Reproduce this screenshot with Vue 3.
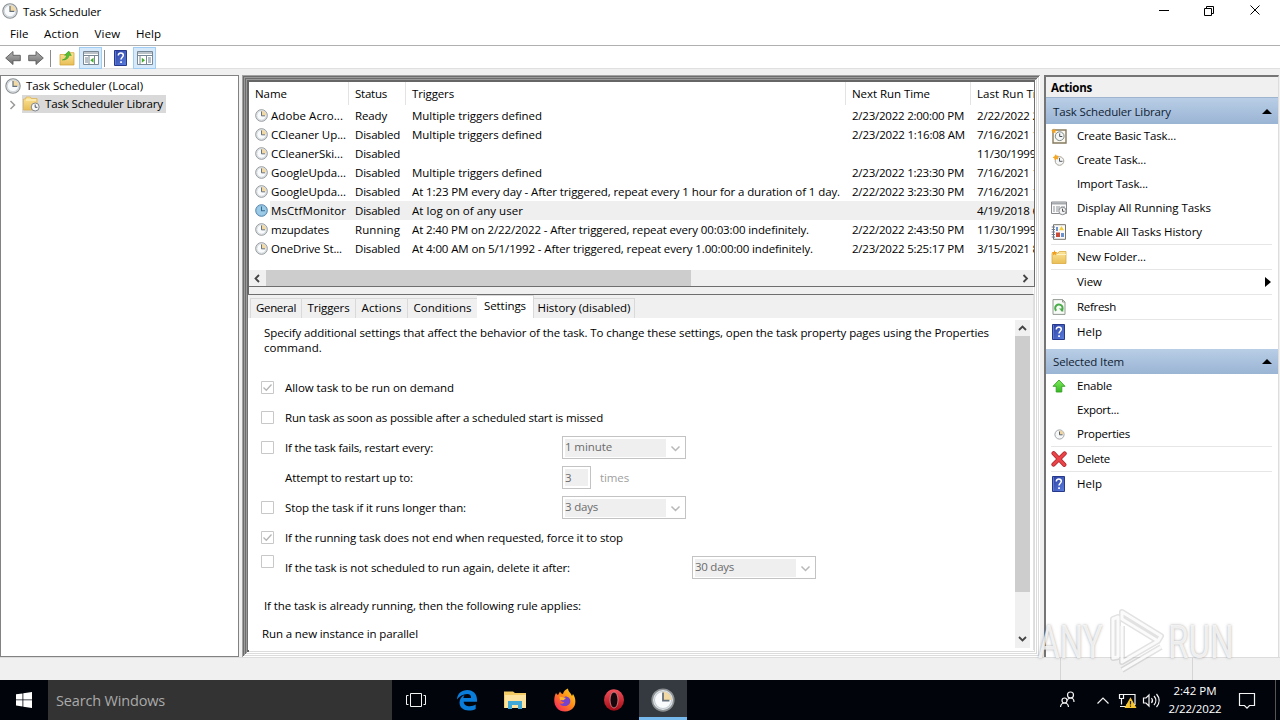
<script setup>
// Spreads the letters of a label so that it fills the given width in pixels.
const vFit = {
  mounted(el, { value }) {
    if (!value) return
    const natural = el.getBoundingClientRect().width
    el.style.letterSpacing = `${(value - natural) / el.textContent.length}px`
  }
}

const menu = [['File', 18.5], ['Action', 35], ['View', 26], ['Help', 25]]

const M = ['Multiple triggers defined', 130]
const rows = [
  { name: ['Adobe Acro...', 72], status: ['Ready', 32], trig: M, next: ['2/23/2022 2:00:00 PM', 112], last: '2/22/2022 2:00:00 PM' },
  { name: ['CCleaner Up...', 75], status: ['Disabled', 45], trig: M, next: ['2/23/2022 1:16:08 AM', 113], last: '7/16/2021 1:16:08 AM' },
  { name: ['CCleanerSki...', 72], status: ['Disabled', 45], trig: ['', 0], next: ['', 0], last: '11/30/1999 12:00:00 AM' },
  { name: ['GoogleUpda...', 75], status: ['Disabled', 45], trig: M, next: ['2/23/2022 1:23:30 PM', 112], last: '7/16/2021 1:23:30 PM' },
  { name: ['GoogleUpda...', 75], status: ['Disabled', 45], trig: ['At 1:23 PM every day - After triggered, repeat every 1 hour for a duration of 1 day.', 428], next: ['2/22/2022 3:23:30 PM', 112], last: '7/16/2021 1:23:30 PM' },
  { name: ['MsCtfMonitor', 75], status: ['Disabled', 45], trig: ['At log on of any user', 111], next: ['', 0], last: '4/19/2018 6:00:00 PM', sel: true },
  { name: ['mzupdates', 58], status: ['Running', 45], trig: ['At 2:40 PM on 2/22/2022 - After triggered, repeat every 00:03:00 indefinitely.', 397], next: ['2/22/2022 2:43:50 PM', 112], last: '11/30/1999 12:00:00 AM' },
  { name: ['OneDrive St...', 71], status: ['Disabled', 45], trig: ['At 4:00 AM on 5/1/1992 - After triggered, repeat every 1.00:00:00 indefinitely.', 401], next: ['2/23/2022 5:25:17 PM', 112], last: '3/15/2021 8:25:17 PM' }
]

const tabs = [['General', 40, 't1'], ['Triggers', 42, 't2'], ['Actions', 40, 't3'], ['Conditions', 58, 't4'], ['Settings', 42, 't5'], ['History (disabled)', 93, 't6']]

const settings = [
  { text: 'Allow task to be run on demand', w: 169, box: true, on: true },
  { text: 'Run task as soon as possible after a scheduled start is missed', w: 318, box: true },
  { text: 'If the task fails, restart every:', w: 148, box: true, combo: ['1 minute', 47] },
  { text: 'Attempt to restart up to:', w: 128, field: true },
  { text: 'Stop the task if it runs longer than:', w: 181, box: true, combo: ['3 days', 33] },
  { text: 'If the running task does not end when requested, force it to stop', w: 338, box: true, on: true },
  { text: 'If the task is not scheduled to run again, delete it after:', w: 285, box: true, raised: true, combo: ['30 days', 39], far: true }
]

const groups = [
  { title: ['Task Scheduler Library', 118], items: [
    { t: 'Create Basic Task...', w: 99, i: 'basic' },
    { t: 'Create Task...', w: 69, i: 'create' },
    { t: 'Import Task...', w: 71 },
    { t: 'Display All Running Tasks', w: 134, i: 'display' },
    { t: 'Enable All Tasks History', w: 125, i: 'history' },
    { t: 'New Folder...', w: 69, i: 'newfolder', sep: true },
    { t: 'View', w: 25, sep: true, arrow: true },
    { t: 'Refresh', w: 39, i: 'refresh', sep: true },
    { t: 'Help', w: 25, i: 'help', sep: true }
  ] },
  { title: ['Selected Item', 71], items: [
    { t: 'Enable', w: 35, i: 'enable' },
    { t: 'Export...', w: 42 },
    { t: 'Properties', w: 53, i: 'props' },
    { t: 'Delete', w: 33, i: 'delete', sep: true },
    { t: 'Help', w: 25, i: 'help', sep: true }
  ] }
]
</script>

<template>
  <div class="screen">
    <svg class="defs" width="0" height="0">
      <defs>
        <linearGradient id="gArrow" x1="0" y1="0" x2="0" y2="1"><stop offset="0" stop-color="#b4b4b4" /><stop offset="1" stop-color="#6e6e6e" /></linearGradient>
        <linearGradient id="gFolder" x1="0" y1="0" x2="0" y2="1"><stop offset="0" stop-color="#fbe59a" /><stop offset="1" stop-color="#e9be55" /></linearGradient>
        <linearGradient id="gHelp" x1="0" y1="0" x2="1" y2="1"><stop offset="0" stop-color="#2b3f9f" /><stop offset="1" stop-color="#5b7fe0" /></linearGradient>
        <linearGradient id="gGreen" x1="0" y1="0" x2="0" y2="1"><stop offset="0" stop-color="#7fef5c" /><stop offset="1" stop-color="#35b722" /></linearGradient>
        <linearGradient id="gFox" x1="1" y1="0" x2="0" y2="1"><stop offset="0" stop-color="#ffe226" /><stop offset=".45" stop-color="#ff8a16" /><stop offset="1" stop-color="#f5156c" /></linearGradient>
        <linearGradient id="gOpera" x1="0" y1="0" x2="0" y2="1"><stop offset="0" stop-color="#f2525c" /><stop offset="1" stop-color="#a00a14" /></linearGradient>
        <symbol id="clock" viewBox="0 0 16 16">
          <circle cx="8" cy="8" r="7.2" fill="#dfe6ea" stroke="#8d9092" stroke-width="1.1" />
          <circle cx="8" cy="8" r="5.7" fill="#f8fafb" stroke="#c3cad0" stroke-width=".7" />
          <path d="M8 8V2.3A5.7 5.7 0 0 1 13.7 8Z" fill="#f2d9a4" />
          <path d="M8 3v5.4h4.3" fill="none" stroke="#66707a" stroke-width="1.2" />
        </symbol>
        <symbol id="clockblue" viewBox="0 0 16 16">
          <circle cx="8" cy="8" r="7.2" fill="#93c0de" stroke="#5689ae" stroke-width="1.2" />
          <circle cx="8" cy="8" r="5.5" fill="#9ccbe7" />
          <path d="M8 3v5.4h4.3" fill="none" stroke="#3a6c90" stroke-width="1.3" />
        </symbol>
        <symbol id="left" viewBox="0 0 16 16"><path d="M.7 8 8 1.5v3.8h7.3v5.4H8v3.8Z" fill="url(#gArrow)" stroke="#5c5c5c" stroke-width=".9" /></symbol>
        <symbol id="right" viewBox="0 0 16 16"><path d="M15.3 8 8 1.5v3.8H.7v5.4H8v3.8Z" fill="url(#gArrow)" stroke="#5c5c5c" stroke-width=".9" /></symbol>
        <symbol id="upfolder" viewBox="0 0 16 16">
          <path d="M1 15V4.5h6l1.5-1.8H15V15Z" fill="url(#gFolder)" stroke="#d3a63c" stroke-width=".8" />
          <path d="M3.3 10C6 9.300 7.300 7.500 7.700 5.200L5.500 5.300 9.800 1l2.500 4.500-2.200-.2C9.600 8.500 7 10.300 3.300 10Z" fill="#52c234" stroke="#2d941f" stroke-width=".5" />
        </symbol>
        <symbol id="paneL" viewBox="0 0 16 14">
          <path d="M.5.5h15v13H.5Z" fill="#fff" stroke="#788794" /><path d="M1 2h14M1 4.500h14" stroke="#788794" />
          <path d="M6 5v9M11.500 5v9" stroke="#788794" /><path d="M2 7h3M2 9h3M2 11h3" stroke="#6f8090" />
          <path d="M10.500 6.800v5L7.300 9.300Z" fill="#3faa2c" />
        </symbol>
        <symbol id="paneR" viewBox="0 0 16 14">
          <path d="M.5.5h15v13H.5Z" fill="#fff" stroke="#788794" /><path d="M1 2h14M1 4.500h14" stroke="#788794" />
          <path d="M9.500 5v9M3 5v9" stroke="#788794" /><path d="M11 7h3M11 9h3M11 11h3" stroke="#6f8090" />
          <path d="M4.800 6.800v5L8 9.300Z" fill="#3faa2c" />
        </symbol>
        <symbol id="help" viewBox="0 0 13 16">
          <path d="M.5.5h12v15H.5Z" fill="url(#gHelp)" stroke="#26388c" />
          <path d="M1.500 1v14" stroke="#5f78d0" />
          <path d="M4.300 5.600C4.300 3.700 5.500 3 6.800 3s2.500.8 2.500 2.300c0 1.900-2.300 2-2.300 4.200" fill="none" stroke="#fff" stroke-width="1.500" />
          <path d="M6.200 11.200h1.700v1.700H6.200Z" fill="#fff" />
        </symbol>
        <symbol id="folderclock" viewBox="0 0 17 16">
          <path d="M.5 14V3h2l.8-2h4l1 1.500H14V14Z" fill="url(#gFolder)" stroke="#dcb358" stroke-width=".8" />
          <path d="M3 4h10" stroke="#fff6d3" />
          <circle cx="12.200" cy="11" r="4" fill="#f7f8f8" stroke="#80878d" /><path d="M12.200 8.500v2.800h2.200" fill="none" stroke="#4c555d" />
        </symbol>
        <symbol id="basic" viewBox="0 0 16 16">
          <path d="M2 2h13v13H2Z" fill="#fbf8ef" stroke="#85795f" stroke-width="1.400" />
          <circle cx="8.700" cy="8.200" r="4.400" fill="#f4f6f6" stroke="#7c8a88" /><path d="M8.700 5.500v3h2.600" fill="none" stroke="#46504e" />
          <path d="m3 .2.8 1.700 1.900.2-1.400 1.300.4 1.900L3 4.400l-1.700.9.300-1.900L.2 2.100l2-.2Z" fill="#f3a11e" />
        </symbol>
        <symbol id="create" viewBox="0 0 16 16">
          <circle cx="8.500" cy="9" r="4.300" fill="#f4f6f6" stroke="#a9a39a" /><path d="M8.500 6v3.300h3" fill="none" stroke="#565e66" />
          <path d="m4.700 2.800.7 1.500 1.800-.2-1.100 1.400.8 1.500-1.700-.4-1.100 1.300-.2-1.700-1.600-.8 1.600-.7Z" fill="#f5a623" stroke="#f5a623" />
        </symbol>
        <symbol id="display" viewBox="0 0 16 16">
          <path d="M.5 2h15v11.500H.5Z" fill="#fbfbfb" stroke="#868a8e" /><path d="M1 3.500h14" stroke="#a5a9ad" stroke-width="2" />
          <path d="M2 7h2M2 9h2M2 11h2M5 7h4M5 9h3M5 11h2M10 7h4" stroke="#8d9296" />
          <circle cx="11.500" cy="11" r="3.700" fill="#f4f4f4" stroke="#868a8e" /><path d="M11.500 8.700v2.600h2" fill="none" stroke="#555" />
        </symbol>
        <symbol id="history" viewBox="0 0 16 16">
          <path d="M2.500.7h12v14.600h-12Z" fill="#fafafa" stroke="#76736b" />
          <path d="M.7 3H4M.7 5.500H4M.7 8H4M.7 10.500H4M.7 13H4" stroke="#6d7a94" />
          <path d="m10.500 2 2.500 4.200H8Z" fill="#f5cb35" /><path d="M5 8.500h4V13H5Z" fill="#c64a35" /><path d="M5 3h2v4H5Zm5 6h3v4h-3Z" fill="#6a93cf" />
        </symbol>
        <symbol id="newfolder" viewBox="0 0 16 16">
          <path d="M1 14.500V4.200h6l1.200-1.700H15v12Z" fill="url(#gFolder)" stroke="#d9ab43" stroke-width=".8" /><path d="M6 5.500h9" stroke="#fff2c2" />
          <path d="m3.500 1 .7 1.900 2 .2-1.600 1.300.5 2-1.600-1.200-1.700 1.200.5-2L.7 3.100l2.100-.2Z" fill="#f39a16" />
        </symbol>
        <symbol id="refresh" viewBox="0 0 16 16">
          <path d="M2 .6h9.500L14 3v12.400H2Z" fill="#f7faf6" stroke="#929a90" /><path d="M11.500.6V3H14" fill="none" stroke="#929a90" />
          <path d="M5.300 11.800A3.700 3.700 0 1 1 10.200 12" fill="none" stroke="#49ac49" stroke-width="2" /><path d="M7.800 9.400h4.400V13Z" fill="#49ac49" />
        </symbol>
        <symbol id="enable" viewBox="0 0 16 16"><path d="M8 2 14 8.300h-3.200V14H5.200V8.300H2Z" fill="url(#gGreen)" stroke="#35a025" stroke-width=".9" /></symbol>
        <symbol id="props" viewBox="0 0 16 16"><circle cx="8.500" cy="8.500" r="4.600" fill="#f6f7f7" stroke="#a0a5a8" /><path d="M8.500 8.500V4.500a4 4 0 0 1 4 4Z" fill="#f1d5a0" /><path d="M8.500 5.500v3.300h3" fill="none" stroke="#59616a" /></symbol>
        <symbol id="delete" viewBox="0 0 16 16"><path d="M2.600 2.300 13.300 13.800M13.600 2.500 2.500 13.600" stroke="#a92226" stroke-width="4.200" stroke-linecap="round" /><path d="M2.600 2.300 13.300 13.800M13.600 2.500 2.500 13.600" stroke="#e94449" stroke-width="2.800" stroke-linecap="round" /></symbol>
      </defs>
    </svg>

    <header class="title">
      <svg class="i16"><use href="#clock" /></svg>
      <span v-fit="78">Task Scheduler</span>
      <svg class="winbtns" viewBox="0 0 120 24" fill="none" stroke="#000">
        <path d="M9 10.500h10M54.500 8.500h7v7h-7ZM56.500 8.500v-2h7v7h-2M100.500 5.500l9 9M109.500 5.500l-9 9" />
      </svg>
    </header>
    <nav class="menu"><span v-for="m in menu" :key="m[0]" v-fit="m[1]">{{ m[0] }}</span></nav>
    <div class="tools">
      <svg class="i16"><use href="#left" /></svg>
      <svg class="i16 second"><use href="#right" /></svg>
      <i class="div d1"></i>
      <svg class="i16"><use href="#upfolder" /></svg>
      <span class="hot h1"><svg class="pane"><use href="#paneL" /></svg></span>
      <i class="div d2"></i>
      <svg class="book"><use href="#help" /></svg>
      <span class="hot h2"><svg class="pane"><use href="#paneR" /></svg></span>
    </div>

    <main class="main">
      <aside class="tree">
        <div class="root"><svg class="i16"><use href="#clock" /></svg><span v-fit="117">Task Scheduler (Local)</span></div>
        <div class="node">
          <svg class="chev" viewBox="0 0 8 10"><path d="m1.500 1 4 4-4 4" fill="none" stroke="#999" stroke-width="1.500" /></svg>
          <div class="picked"><svg class="fold"><use href="#folderclock" /></svg><span v-fit="118">Task Scheduler Library</span></div>
        </div>
      </aside>

      <section class="center">
        <div class="list">
          <div class="grid head">
            <span><b v-fit="32">Name</b></span><span><b v-fit="32">Status</b></span><span><b v-fit="42">Triggers</b></span><span><b v-fit="78">Next Run Time</b></span><span><b v-fit="76">Last Run Time</b></span>
          </div>
          <div v-for="(r, n) in rows" :key="n" class="grid row" :class="{ sel: r.sel }">
            <span class="nm"><svg class="i14"><use :href="r.sel ? '#clockblue' : '#clock'" /></svg><b v-fit="r.name[1]">{{ r.name[0] }}</b></span>
            <span><b v-fit="r.status[1]">{{ r.status[0] }}</b></span>
            <span><b v-fit="r.trig[1]">{{ r.trig[0] }}</b></span>
            <span><b v-fit="r.next[1]">{{ r.next[0] }}</b></span>
            <span class="last"><b>{{ r.last }}</b></span>
          </div>
          <div class="hbar">
            <svg viewBox="0 0 17 15"><path d="m10 4-3.500 3.500L10 11" /></svg>
            <i></i>
            <svg class="end" viewBox="0 0 17 15"><path d="m6.500 4 3.500 3.500L6.500 11" /></svg>
          </div>
        </div>

        <div class="detail">
          <div class="tabs"><div v-for="t in tabs" :key="t[0]" class="tab" :class="t[2]"><span v-fit="t[1]">{{ t[0] }}</span></div></div>
          <div class="page">
            <div class="form">
              <p class="intro"><span v-fit="725">Specify additional settings that affect the behavior of the task. To change these settings, open the task property pages using the Properties</span><br><span v-fit="58">command.</span></p>
              <div v-for="s in settings" :key="s.text" class="opt">
                <svg v-if="s.box" class="check" :class="{ raised: s.raised }" viewBox="0 0 13 13"><path d="M.5.5h12v12H.5Z" fill="#fff" stroke="#c8c8c8" /><path v-if="s.on" d="m2.500 6.500 2.800 2.800 5.200-5.800" fill="none" stroke="#b5b5b5" stroke-width="1.300" /></svg>
                <span v-else class="check"></span>
                <span class="lbl" :class="{ far: s.far }"><b v-fit="s.w">{{ s.text }}</b></span>
                <div v-if="s.combo" class="combo"><span class="val"><b v-fit="s.combo[1]">{{ s.combo[0] }}</b></span><svg class="drop" viewBox="0 0 17 20"><path d="m4.500 8.500 4 4 4-4" fill="none" stroke="#b8b8b8" stroke-width="1.500" /></svg></div>
                <template v-if="s.field"><div class="field"><span>3</span></div><span class="times"><b v-fit="29">times</b></span></template>
              </div>
              <p class="rule"><span v-fit="317">If the task is already running, then the following rule applies:</span></p>
              <p class="inst"><span v-fit="156">Run a new instance in parallel</span></p>
            </div>
            <div class="vbar">
              <svg viewBox="0 0 15 16"><path d="m4 10 3.500-3.500L11 10" /></svg>
              <i></i>
              <svg class="end" viewBox="0 0 15 16"><path d="m4 6 3.500 3.500L11 6" /></svg>
            </div>
          </div>
        </div>
      </section>

      <aside class="actions">
        <h2><span v-fit="41">Actions</span></h2>
        <div v-for="g in groups" :key="g.title[0]" class="group">
          <h3><span v-fit="g.title[1]">{{ g.title[0] }}</span><svg viewBox="0 0 10 5"><path d="M0 5 5 0l5 5Z" fill="#000" /></svg></h3>
          <div v-for="(a, n) in g.items" :key="n" class="act" :class="{ sep: a.sep }">
            <span class="ic"><svg v-if="a.i" :class="a.i === 'help' ? 'book' : 'i16'"><use :href="'#' + a.i" /></svg></span>
            <span class="name" v-fit="a.w">{{ a.t }}</span>
            <svg v-if="a.arrow" class="sub" viewBox="0 0 6 10"><path d="m0 0 6 5-6 5Z" fill="#000" /></svg>
          </div>
        </div>
      </aside>
    </main>

    <footer class="status"><i class="s1"></i><i class="s2"></i></footer>

    <div class="taskbar">
      <div class="start"><svg width="16" height="16" viewBox="0 0 16 16"><path d="M0 2.300 6.500 1.400v6.100H0ZM7.300 1.300 16 0v7.500H7.300ZM0 8.300h6.500v6.200L0 13.600ZM7.300 8.300H16V16l-8.700-1.300Z" fill="#fff" /></svg></div>
      <div class="search"><span v-fit="109">Search Windows</span></div>
      <div class="app first"><svg width="20" height="14" viewBox="0 0 20 14" fill="none" stroke="#f4f4f4"><path d="M4.500.5h11v13h-11ZM2.500 2.500h-2v9h2M17.500 2.500h2v9h-2" /></svg></div>
      <div class="app edge"><svg width="22" height="22" viewBox="0 0 22 22"><path d="M1 10.500C1.400 4.500 5.500 1 11.300 1 17.400 1 21 5.300 21 10.600v2.100H7.700c.2 3.300 3 4.600 6 4.600 2.300 0 4.200-.6 6-1.700v4.300C17.700 21 15.400 21.600 12.700 21.600 7.300 21.600 3.500 18.500 3.500 13.600c0-3.600 2-6.200 5-7.700-.7.900-1 1.900-1.100 3.200h7.700c0-2.700-1.200-4-3.900-4C7 5.100 3.500 7.200 1 10.500Z" fill="#0a7cd9" /></svg></div>
      <div class="app"><svg width="22" height="20" viewBox="0 0 22 20"><path d="M0 18V1.500h9L11 3h11v15Z" fill="#f2cb65" /><path d="M1 5h21v13H1Z" fill="#fce4a0" /><path d="M4 19v-8h14v8h-4v-4H8v4Z" fill="#40a9d8" /></svg></div>
      <div class="app"><svg width="24" height="24" viewBox="0 0 24 24"><path d="M3 5c.6 1 1.200 1.700 2 2l2-3.500c.8 1.600 1.600 2.200 3 2.500C10.500 3.500 12 1.500 15 .5c0 3 3 4.500 4 7.500l1-2c4.500 6.500 3 17-8 17.500C3 23.500-1.500 14 3 5Z" fill="url(#gFox)" /><path d="M7 10.500c2 .2 3.500-.4 5-2 4 0 5.800 2.500 5.200 5.700-1 4.300-8 5.500-10.600 1.300 2 .7 3.700.2 4.800-1.200-2.200-.2-3.800-1.500-4.400-3.800Z" fill="#7542c9" /><path d="M6.500 8.500 13 10l-2.500 2.300-3.500-.3Z" fill="#ffb42d" /></svg></div>
      <div class="app"><svg width="22" height="22" viewBox="0 0 22 22"><ellipse cx="11" cy="11" rx="10" ry="10.700" fill="url(#gOpera)" /><ellipse cx="11" cy="11" rx="4" ry="8" fill="#15070b" stroke="#dc8c8f" stroke-width=".8" /></svg></div>
      <div class="app live"><svg width="24" height="24"><use href="#clock" /></svg></div>
      <div class="tray">
        <svg width="220" height="40" viewBox="1060 680 220 40" fill="none" stroke="#f3f3f3" stroke-width="1.200">
          <circle cx="1070.500" cy="695" r="3" /><circle cx="1064.500" cy="700.500" r="2.500" /><path d="M1060.500 707c.3-2.500 1.800-4 4-4s3.800 1.500 4 4M1067 700.500c1-2 2-2.500 3.500-2.500 2.500 0 3.500 2 3.500 4" />
          <path d="m1097.500 703.500 5.500-5.500 5.500 5.500" />
          <path d="M1123 694.500h12v10h-8.500M1119.500 694.500h4v4h-4ZM1121.500 698.500v6M1120 706.500h9" /><path d="M1130.500 698.500 1135.500 707.500h-10Z" fill="#f7c52e" stroke="#f7c52e" /><path d="M1130.500 701v3.500M1130.500 705.500v1.200" stroke="#222" />
          <path d="m1143.500 698h2.500l3-3v11l-3-3h-2.500ZM1151.500 698c1.200 1.500 1.200 3.500 0 5M1154 696c2.300 2.700 2.300 6.300 0 9M1156.500 694c3.300 4 3.300 9 0 13" />
          <path d="M1239.500 693.500h15v12h-5l-2.500 2.700-2.500-2.700h-5Z" /><path d="M1275.500 680v40" stroke="#555" stroke-width="1" />
        </svg>
        <div class="time"><span v-fit="43">2:42 PM</span><span v-fit="53">2/22/2022</span></div>
      </div>
    </div>

    <div class="mark">
      <span class="any">ANY</span>
      <svg width="58" height="66" viewBox="0 0 58 66" fill="none" stroke-linejoin="round">
        <path d="M5 50V11l5-2v40ZM14 4 53 28l-3 5L14 11ZM14 18v36l36-21M14 62l39-23" stroke="#8a8a8a" stroke-opacity=".25" stroke-width="6" />
        <path d="M5 50V11l5-2v40ZM14 4 53 28l-3 5L14 11ZM14 18v36l36-21M14 62l39-23" stroke="#fff" stroke-opacity=".85" stroke-width="3" />
      </svg>
      <span class="run">RUN</span>
    </div>
  </div>
</template>

<style>
html, body { margin: 0; overflow: hidden; }
</style>

<style scoped>
.screen { position: relative; width: 1280px; height: 720px; overflow: hidden; display: flex; flex-direction: column; background: #f0f0f0; color: #000; font: 11.5px/15px "Open Sans", "Noto Sans", sans-serif; }
.screen * { box-sizing: border-box; }
.defs { position: absolute; }
span, b { white-space: nowrap; font-weight: inherit; }
svg { display: block; flex: none; }
b { display: inline-block; }
p, h2, h3 { margin: 0; }
.i16 { width: 16px; height: 16px; }
.i14 { width: 13px; height: 13px; margin-top: 1px; }
.book { width: 13px; height: 16px; }
.title { height: 24px; background: #fff; display: flex; align-items: center; padding-left: 2px; gap: 5px; flex: none; }
.title .i16, .title span { margin-top: -2px; }
.winbtns { width: 120px; height: 24px; margin-left: auto; margin-right: 10px; }
.menu { height: 22px; background: #fff; border-bottom: 1px solid #b0b0b0; display: flex; align-items: center; padding: 0 0 2px 10px; gap: 15.500px; flex: none; }
.tools { height: 23px; background: #fff; border-bottom: 1px solid #e0e0e0; display: flex; align-items: center; padding: 2px 0 0 5px; flex: none; }
.second { margin-left: 7px; }
.div { width: 1px; height: 17px; background: #8c8c8c; }
.d1 { margin: 0 8px 0 6px; }
.d2 { margin: 0 9px 0 2px; }
.hot { width: 23px; height: 22px; background: #d5e9fa; border: 1px solid #9fcdf3; display: flex; justify-content: center; align-items: center; }
.h1 { margin-left: 4px; }
.h2 { margin-left: 6px; }
.pane { width: 16px; height: 14px; }
.main { height: 588px; display: flex; padding-top: 6px; flex: none; }
.tree { width: 239px; height: 582px; background: #fff; border: 1px solid #828282; padding: 1px 0 0 4px; }
.root { height: 18px; display: flex; align-items: center; gap: 5px; }
.node { height: 18px; display: flex; align-items: center; padding-left: 4px; }
.root span, .picked span { margin-top: -1px; }
.chev { width: 8px; height: 10px; margin-top: 2px; }
.picked { height: 18px; width: 144px; margin-left: 5px; padding-left: 1px; background: #d9d9d9; display: flex; align-items: center; gap: 5px; }
.fold { width: 17px; height: 16px; }
.center {
  width: 798px; height: 582px; margin-left: 3px; padding: 7px; background: #f0f0f0; display: flex; flex-direction: column;
  box-shadow:
    inset 1px 1px #a2a2a2, inset -1px -1px #fff,
    inset 2px 2px #6c6c6c, inset -2px -2px #dcdcdc,
    inset 3px 3px #9a9a9a, inset -3px -3px #fff,
    inset 4px 4px #6c6c6c, inset -4px -4px #dcdcdc,
    inset 5px 5px #9a9a9a, inset -5px -5px #fff,
    inset 7px 7px #666, inset -6px -6px #dcdcdc, inset -7px -7px #fff;
}
.list { height: 205px; margin-right: -2px; background: #fff; border-bottom: 1px solid #6e6e6e; border-right: 1px solid #6e6e6e; overflow: hidden; flex: none; }
.grid { display: grid; grid-template-columns: 100px 57px 440px 125px 64px; }
.head { height: 24px; }
.head > span { border-right: 1px solid #e3e3e3; height: 23px; padding: 4px 0 0 6px; overflow: hidden; }
.head > span:last-child { border: 0; }
.row { height: 19px; }
.row > span { padding: 2px 0 0 6px; overflow: hidden; }
.row > .nm { display: flex; gap: 3px; padding-left: 6px; }
.row .last { letter-spacing: -.2px; }
.sel { background: linear-gradient(90deg, #fff 21px, #efefef 21px); }
.hbar { height: 16px; margin-top: 12px; background: #f0f0f0; display: flex; align-items: center; }
.hbar svg { width: 17px; height: 15px; }
.hbar path, .vbar path { fill: none; stroke: #444; stroke-width: 1.800; }
.hbar i { width: 425px; height: 16px; background: #cdcdcd; }
.end { margin-left: auto; }
.detail { margin: 7px -1px 0 -2px; height: 356px; border: 1px solid #6e6e6e; border-right-color: #e0e0e0; border-bottom: 0; background: #f0f0f0; display: flex; flex-direction: column; }
.tabs { height: 23px; padding-left: 2px; display: flex; align-items: flex-end; }
.tab { height: 20px; border: 1px solid #d9d9d9; border-width: 1px 1px 0 0; display: flex; justify-content: center; align-items: center; padding-bottom: 2px; }
.t1 { width: 52px; border-left-width: 1px; } .t2 { width: 54px; } .t3 { width: 52px; } .t4 { width: 69px; border-right: 0; }
.t5 { width: 57px; height: 23px; background: #fff; padding-bottom: 4px; } .t6 { width: 101px; }
.page { flex: 1; background: #fff; display: flex; min-height: 0; }
.form { width: 767px; padding: 7px 0 0 13px; }
.intro { padding-left: 3px; height: 48px; }
.opt { height: 30px; display: flex; align-items: center; }
.check { width: 13px; height: 13px; margin: 0 11px 2px 0; flex: none; }
.raised { margin-bottom: 13px; }
.lbl { width: 277px; margin-top: -2px; }
.far { width: 407px; }
.combo { width: 124px; height: 23px; margin-bottom: 1px; border: 1px solid #c3c3c3; background: #fff; display: flex; align-items: center; padding: 0 0 0 2px; color: #6b6b6b; }
.val { width: 101px; height: 18px; background: #efefef; line-height: 16px; flex: none; }
.drop { width: 17px; height: 20px; margin-left: 1px; }
.field { width: 29px; height: 23px; border: 1px solid #c3c3c3; padding: 2px; color: #6b6b6b; margin-bottom: 1px; }
.field span { display: block; height: 17px; background: #efefef; line-height: 17px; }
.times { margin: -2px 0 0 9px; color: #a0a0a0; }
.rule { padding: 15px 0 0 3px; }
.inst { padding: 13px 0 0 1px; }
.vbar { width: 15px; height: 328px; margin-top: 2px; background: #f0f0f0; display: flex; flex-direction: column; }
.vbar svg { width: 15px; height: 16px; }
.vbar .end { margin: auto 0 1px; }
.vbar i { height: 256px; background: #cdcdcd; }
.actions { width: 235px; height: 582px; margin-left: 4px; background: #fff; border: 2px solid #757575; border-width: 2px 0 0 2px; border-right: 1px solid #ddd; }
.actions h2 { height: 21px; padding: 3px 0 0 5px; background: #f0f0f0; font: bold 11.500px/15px "Open Sans", sans-serif; border-bottom: 1px solid #9eb5cf; }
.group h3 { height: 25px; padding: 0 6px 0 7px; background: linear-gradient(#b9cee6, #9ab4d4); font: inherit; color: #101d33; display: flex; align-items: center; justify-content: space-between; }
.actions h2 + .group h3 { height: 26px; padding-top: 1px; }
.group + .group { margin-top: 5px; }
.group h3 svg { width: 10px; height: 5px; }
.act { height: 24px; display: flex; align-items: center; margin: 0 6px 0 5px; }
.name { margin-top: -2px; }
.sep { height: 25px; border-top: 1px solid #e6e6e6; }
.ic { width: 16px; margin-right: 10px; display: flex; padding-left: 0; }
.ic .book { margin-left: 1px; }
.sub { width: 6px; height: 10px; margin-left: auto; margin-right: 1px; margin-top: -1px; }
.status { height: 23px; border-top: 1px solid #dcdcdc; display: flex; flex: none; }
.status i { width: 1px; background: #d5d5d5; }
.s1 { margin-left: 1060px; } .s2 { margin-left: 131px; }
.taskbar { height: 40px; background: #01040b; display: flex; color: #fff; flex: none; }
.start { width: 48px; display: flex; align-items: center; justify-content: center; }
.search { width: 344px; background: #333; color: #aaa; font-size: 14.500px; display: flex; align-items: center; padding: 1px 0 0 8px; }
.app { width: 49.400px; display: flex; align-items: center; justify-content: center; }
.first { padding-right: 2px; }
.edge { padding-left: 1px; }
.live { width: 48px; background: #343a3f; border-bottom: 3px solid #76b9ed; padding-top: 2px; }
.tray { width: 220px; margin-left: auto; position: relative; }
.time { position: absolute; left: 100px; top: 2px; width: 70px; height: 36px; display: flex; flex-direction: column; align-items: center; line-height: 18px; }
.mark { position: absolute; left: 1038px; top: 608px; width: 200px; height: 66px; display: flex; align-items: center; color: rgba(255, 255, 255, .8); font: 46px/50px Roboto, sans-serif; text-shadow: 0 0 3px rgba(80, 80, 80, .5); }
.mark svg { width: 58px; height: 66px; position: absolute; left: 70px; top: 0; }
.mark span { position: absolute; top: 9px; transform-origin: 0 0; transform: scaleX(.72); }
.any { left: 0; } .run { left: 130px; }
</style>
